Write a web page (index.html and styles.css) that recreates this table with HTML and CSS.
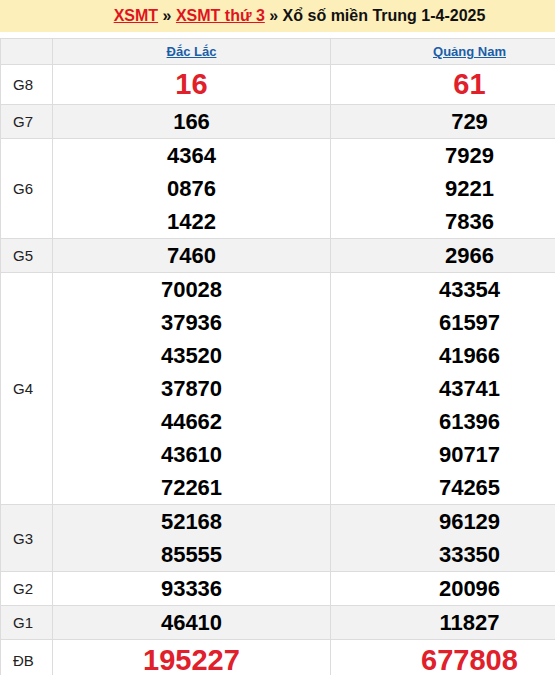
FILE: index.html
```html
<!DOCTYPE html>
<html lang="vi">
<head>
<meta charset="utf-8">
<link rel="stylesheet" href="styles.css">
</head>
<body>
<div class="page">
  <div class="banner">
    <a href="#" class="crumb">XSMT</a> » <a href="#" class="crumb">XSMT thứ 3</a> » Xổ số miền Trung 1-4-2025
  </div>
  <table class="kq">
    <colgroup><col class="c-label"><col class="c-prov"><col class="c-prov"></colgroup>
    <tr class="head alt">
      <th></th>
      <th><a href="#">Đắc Lắc</a></th>
      <th><a href="#">Quảng Nam</a></th>
    </tr>
    <tr class="g8">
      <td class="lbl">G8</td>
      <td><div>16</div></td>
      <td><div>61</div></td>
    </tr>
    <tr class="alt">
      <td class="lbl">G7</td>
      <td><div>166</div></td>
      <td><div>729</div></td>
    </tr>
    <tr>
      <td class="lbl">G6</td>
      <td><div>4364</div><div>0876</div><div>1422</div></td>
      <td><div>7929</div><div>9221</div><div>7836</div></td>
    </tr>
    <tr class="alt">
      <td class="lbl">G5</td>
      <td><div>7460</div></td>
      <td><div>2966</div></td>
    </tr>
    <tr>
      <td class="lbl">G4</td>
      <td><div>70028</div><div>37936</div><div>43520</div><div>37870</div><div>44662</div><div>43610</div><div>72261</div></td>
      <td><div>43354</div><div>61597</div><div>41966</div><div>43741</div><div>61396</div><div>90717</div><div>74265</div></td>
    </tr>
    <tr class="alt">
      <td class="lbl">G3</td>
      <td><div>52168</div><div>85555</div></td>
      <td><div>96129</div><div>33350</div></td>
    </tr>
    <tr>
      <td class="lbl">G2</td>
      <td><div>93336</div></td>
      <td><div>20096</div></td>
    </tr>
    <tr class="alt">
      <td class="lbl">G1</td>
      <td><div>46410</div></td>
      <td><div>11827</div></td>
    </tr>
    <tr class="db">
      <td class="lbl">ĐB</td>
      <td><div>195227</div></td>
      <td><div>677808</div></td>
    </tr>
  </table>
</div>
</body>
</html>
```
FILE: styles.css
```css
html, body {
  margin: 0;
  padding: 0;
  overflow: hidden;
  background: #fff;
}
.page {
  width: 608px;
  font-family: "Liberation Sans", Arial, sans-serif;
}
.banner {
  width: 555px;
  box-sizing: border-box;
  height: 32px;
  line-height: 31px;
  background: #fcefb9;
  font-weight: bold;
  font-size: 16px;
  color: #111;
  text-align: center;
  padding-left: 44px;
  margin-bottom: 6px;
}
.crumb {
  color: #e0141e;
  text-decoration: underline;
}
.kq {
  width: 608px;
  border-collapse: collapse;
  table-layout: fixed;
}
.c-label { width: 52px; }
.c-prov { width: 278px; }
.kq td, .kq th {
  border: 1px solid #dcdcdc;
  padding: 0;
  text-align: center;
  vertical-align: middle;
}
.kq tr.alt { background: #f2f2f2; }
.head th {
  height: 25px;
  font-size: 13px;
  font-weight: bold;
}
.head a {
  color: #1b5ea8;
  text-decoration: underline;
}
.kq td div {
  font-size: 22px;
  font-weight: bold;
  line-height: 33px;
  color: #000;
}
.kq td.lbl {
  text-align: left;
  padding-left: 12px;
  font-size: 15px;
  color: #222;
}
.g8 td div {
  font-size: 29px;
  line-height: 39px;
  color: #e0202a;
}
.db td div {
  font-size: 29px;
  line-height: 40px;
  color: #e0202a;
}
```
